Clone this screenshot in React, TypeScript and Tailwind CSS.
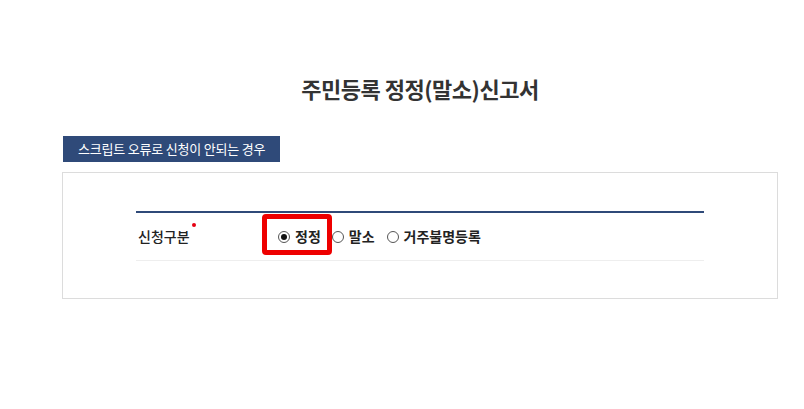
import React, { useState } from 'react';

const options = ['정정', '말소', '거주불명등록'];

export default function App() {
  const [selected, setSelected] = useState('정정');

  return (
    <div className="w-[804px] h-[409px] bg-white font-['Noto_Sans_CJK_KR','Noto_Sans',sans-serif] text-[#333]">
      <div className="ml-[62px] w-[716px] pt-[71px]">
        <h2 className="text-center text-[22px] font-bold leading-[34px] tracking-[-0.5px] text-[#333]">
          주민등록 정정(말소)신고서
        </h2>

        <button className="mt-[31px] ml-[1px] h-[26px] px-[15px] bg-[#2f4a79] text-white text-[13px] leading-[26px] tracking-[-0.2px]">
          스크립트 오류로 신청이 안되는 경우
        </button>

        <div className="mt-[10px] border border-[#dcdcdc] px-[73px] pt-[38px] pb-[37px]">
          <div className="border-t-2 border-[#2f4a79]">
            <div className="flex items-center h-[48px] border-b border-[#eeeeee]">
              <div className="w-[124px] pl-[2px] relative text-[14px] font-medium text-[#222]">
                <span className="relative">
                  신청구분
                  <span className="absolute -right-[6px] -top-[3px] w-[4px] h-[4px] rounded-full bg-[#e60012]" />
                </span>
              </div>
              <div className="flex items-center pl-[18px] relative">
                {options.map((o, i) => (
                  <label
                    key={o}
                    className={`flex items-center cursor-pointer ${i === 0 ? 'mr-[11px]' : 'mr-[12px]'}`}
                    onClick={() => setSelected(o)}
                  >
                    <span className="w-[12px] h-[12px] rounded-full border border-[#555] flex items-center justify-center bg-white">
                      {selected === o && <span className="w-[6px] h-[6px] rounded-full bg-[#111]" />}
                    </span>
                    <span className="ml-[5px] text-[14px] font-semibold text-[#222]">{o}</span>
                  </label>
                ))}
                <span className="absolute left-[2px] -top-[12px] w-[70px] h-[41px] border-[5px] border-[#ee0000] rounded-[4px] pointer-events-none" />
              </div>
            </div>
          </div>
        </div>
      </div>
    </div>
  );
}
